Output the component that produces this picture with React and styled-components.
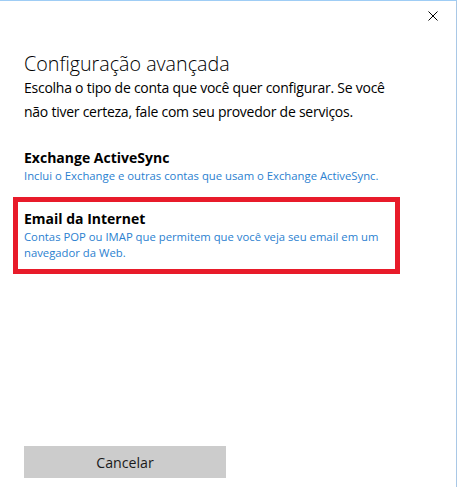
import React from 'react'
import styled, { createGlobalStyle } from 'styled-components';

const GlobalStyle = createGlobalStyle`
  html, body {
    margin: 0;
    padding: 0;
    background: #ffffff;
  }
  body {
    font-family: 'Open Sans', 'Noto Sans', sans-serif;
    color: #000;
  }
`;

const Dialog = styled.div`
  box-sizing: border-box;
  width: 457px;
  height: 487px;
  border-top: 1px solid #9fcdf5;
  border-right: 1px solid #a9c8e6;
  display: flex;
  flex-direction: column;
  background: #fff;
`;

const TitleBar = styled.div`
  height: 31px;
  display: flex;
  justify-content: flex-end;
  align-items: flex-start;
`;

const CloseButton = styled.button`
  border: none;
  background: transparent;
  padding: 0;
  margin: 10px 18px 0 0;
  width: 10px;
  height: 10px;
  display: flex;
  cursor: pointer;
`;

const Body = styled.div`
  flex: 1;
  display: flex;
  flex-direction: column;
  padding: 20px 0 0 24px;
`;

const Title = styled.h1`
  margin: 0;
  font-size: 19.7px;
  font-weight: 300;
  line-height: 24px;
`;

const Intro = styled.p`
  margin: 0;
  font-size: 14px;
  letter-spacing: -0.25px;
  line-height: 24px;
  width: 380px;
`;

const Options = styled.div`
  display: flex;
  flex-direction: column;
  margin-top: 12px;
  margin-left: -11px;
`;

const Option = styled.div`
  box-sizing: border-box;
  width: 387px;
  padding: 7px 6px 8px 6px;
  border: 5px solid ${p => (p.selected ? '#e81b2a' : 'transparent')};
  cursor: pointer;
`;

const OptionName = styled.div`
  font-size: 14px;
  font-weight: 700;
  line-height: 20px;
`;

const OptionDesc = styled.div`
  font-size: 11.3px;
  line-height: 16px;
  color: #2b7fd0;
`;

const Footer = styled.div`
  padding: 0 0 9px 24px;
`;

const CancelButton = styled.button`
  width: 202px;
  height: 32px;
  border: none;
  padding: 0;
  background: #cccccc;
  font-family: inherit;
  font-size: 14.2px;
  color: #1a1a1a;
  cursor: pointer;
`;

const options = [
  {
    name: 'Exchange ActiveSync',
    desc: 'Inclui o Exchange e outras contas que usam o Exchange ActiveSync.',
  },
  {
    name: 'Email da Internet',
    desc: 'Contas POP ou IMAP que permitem que você veja seu email em um navegador da Web.',
    selected: true,
  },
];

const App = () => {
  return (
    <Dialog>
      <GlobalStyle />
      <TitleBar>
        <CloseButton aria-label="Fechar">
          <svg width="10" height="10" viewBox="0 0 10 10">
            <path d="M0.5 0.5 L9.5 9.5 M9.5 0.5 L0.5 9.5" stroke="#000" strokeWidth="1" />
          </svg>
        </CloseButton>
      </TitleBar>
      <Body>
        <Title>Configuração avançada</Title>
        <Intro>Escolha o tipo de conta que você quer configurar. Se você não tiver certeza, fale com seu provedor de serviços.</Intro>
        <Options>
          {options.map(o => (
            <Option key={o.name} selected={o.selected}>
              <OptionName>{o.name}</OptionName>
              <OptionDesc>{o.desc}</OptionDesc>
            </Option>
          ))}
        </Options>
      </Body>
      <Footer>
        <CancelButton>Cancelar</CancelButton>
      </Footer>
    </Dialog>
  )
}
export default App;
